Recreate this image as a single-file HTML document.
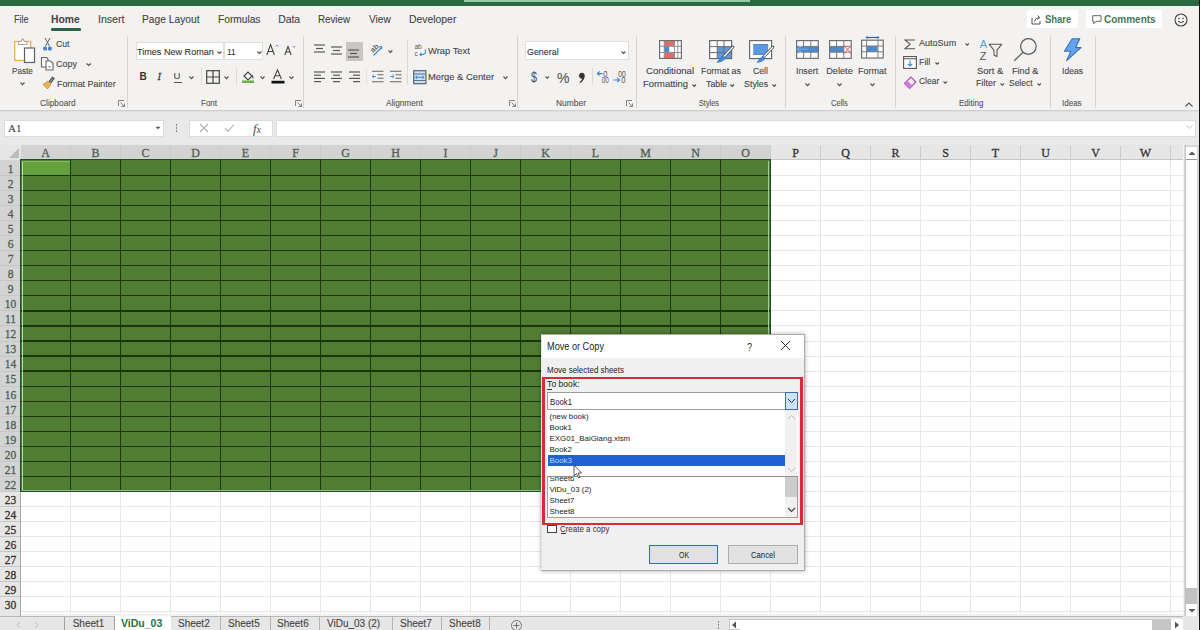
<!DOCTYPE html>
<html><head><meta charset="utf-8"><style>
html,body{margin:0;padding:0;}
body{width:1200px;height:630px;overflow:hidden;position:relative;background:#f3f2f1;font-family:"Liberation Sans", sans-serif;}
div{position:absolute;}
.t{position:absolute;white-space:nowrap;-webkit-text-stroke:0.1px currentColor;}
svg{overflow:visible}
</style></head><body>
<div style="left:0px;top:0px;width:1200px;height:6px;background:#2a6a3e"></div>
<div style="left:464px;top:0px;width:286px;height:2px;background:#9cc9aa"></div>
<div style="left:0px;top:6px;width:1200px;height:1px;background:#e6f2ea"></div>
<div style="left:0px;top:6px;width:1200px;height:104px;background:#f3f2f1"></div>
<span class="t" style="left:13.5px;top:14.70px;font-size:10.4px;line-height:10.4px;color:#444;font-weight:400;font-family:'Liberation Sans', sans-serif;transform:scaleX(0.866);transform-origin:0.00px 0;">File</span>
<span class="t" style="left:51.25px;top:14.87px;font-size:10.2px;line-height:10.2px;color:#444;font-weight:700;font-family:'Liberation Sans', sans-serif;-webkit-text-stroke:0;transform:scaleX(1.014);transform-origin:0.00px 0;">Home</span>
<div style="left:51.2px;top:28px;width:29.5px;height:2.6px;background:#2a6446;border-radius:1.3px"></div>
<span class="t" style="left:97.5px;top:14.70px;font-size:10.4px;line-height:10.4px;color:#444;font-weight:400;font-family:'Liberation Sans', sans-serif;transform:scaleX(1.019);transform-origin:0.00px 0;">Insert</span>
<span class="t" style="left:141.9px;top:14.70px;font-size:10.4px;line-height:10.4px;color:#444;font-weight:400;font-family:'Liberation Sans', sans-serif;transform:scaleX(0.985);transform-origin:0.00px 0;">Page Layout</span>
<span class="t" style="left:217.8px;top:14.70px;font-size:10.4px;line-height:10.4px;color:#444;font-weight:400;font-family:'Liberation Sans', sans-serif;transform:scaleX(0.980);transform-origin:0.00px 0;">Formulas</span>
<span class="t" style="left:278.2px;top:14.70px;font-size:10.4px;line-height:10.4px;color:#444;font-weight:400;font-family:'Liberation Sans', sans-serif;">Data</span>
<span class="t" style="left:318.4px;top:14.70px;font-size:10.4px;line-height:10.4px;color:#444;font-weight:400;font-family:'Liberation Sans', sans-serif;transform:scaleX(0.938);transform-origin:0.00px 0;">Review</span>
<span class="t" style="left:368.8px;top:14.70px;font-size:10.4px;line-height:10.4px;color:#444;font-weight:400;font-family:'Liberation Sans', sans-serif;transform:scaleX(0.975);transform-origin:0.00px 0;">View</span>
<span class="t" style="left:409.0px;top:14.70px;font-size:10.4px;line-height:10.4px;color:#444;font-weight:400;font-family:'Liberation Sans', sans-serif;">Developer</span>
<div style="left:1027px;top:10px;width:51px;height:18px;background:#fff;border-radius:2px"></div>
<div style="left:1086px;top:10px;width:76px;height:18px;background:#fff;border-radius:2px"></div>
<span class="t" style="left:1044.7px;top:14.84px;font-size:10px;line-height:10px;color:#437a5c;font-weight:700;font-family:'Liberation Sans', sans-serif;-webkit-text-stroke:0;transform:scaleX(0.946);transform-origin:0.00px 0;">Share</span>
<span class="t" style="left:1104.0px;top:14.84px;font-size:10px;line-height:10px;color:#437a5c;font-weight:700;font-family:'Liberation Sans', sans-serif;-webkit-text-stroke:0;">Comments</span>
<div style="left:127px;top:36px;width:1px;height:72px;background:#d6d4d2"></div>
<div style="left:303px;top:36px;width:1px;height:72px;background:#d6d4d2"></div>
<div style="left:517px;top:36px;width:1px;height:72px;background:#d6d4d2"></div>
<div style="left:636px;top:36px;width:1px;height:72px;background:#d6d4d2"></div>
<div style="left:784.5px;top:36px;width:1px;height:72px;background:#d6d4d2"></div>
<div style="left:894.5px;top:36px;width:1px;height:72px;background:#d6d4d2"></div>
<div style="left:1050px;top:36px;width:1px;height:72px;background:#d6d4d2"></div>
<div style="left:1095px;top:36px;width:1px;height:72px;background:#d6d4d2"></div>
<span class="t" style="left:39.5px;top:99.05px;font-size:8.8px;line-height:8.8px;color:#555;font-weight:400;font-family:'Liberation Sans', sans-serif;transform:scaleX(0.948);transform-origin:0.00px 0;">Clipboard</span>
<span class="t" style="left:201.3px;top:99.05px;font-size:8.8px;line-height:8.8px;color:#555;font-weight:400;font-family:'Liberation Sans', sans-serif;transform:scaleX(0.909);transform-origin:0.00px 0;">Font</span>
<span class="t" style="left:386.0px;top:99.05px;font-size:8.8px;line-height:8.8px;color:#555;font-weight:400;font-family:'Liberation Sans', sans-serif;transform:scaleX(0.938);transform-origin:0.00px 0;">Alignment</span>
<span class="t" style="left:555.7px;top:99.05px;font-size:8.8px;line-height:8.8px;color:#555;font-weight:400;font-family:'Liberation Sans', sans-serif;transform:scaleX(0.959);transform-origin:0.00px 0;">Number</span>
<span class="t" style="left:699.3px;top:99.05px;font-size:8.8px;line-height:8.8px;color:#555;font-weight:400;font-family:'Liberation Sans', sans-serif;transform:scaleX(0.830);transform-origin:0.00px 0;">Styles</span>
<span class="t" style="left:830.5px;top:99.05px;font-size:8.8px;line-height:8.8px;color:#555;font-weight:400;font-family:'Liberation Sans', sans-serif;transform:scaleX(0.858);transform-origin:0.00px 0;">Cells</span>
<span class="t" style="left:959.3px;top:99.05px;font-size:8.8px;line-height:8.8px;color:#555;font-weight:400;font-family:'Liberation Sans', sans-serif;transform:scaleX(0.910);transform-origin:0.00px 0;">Editing</span>
<span class="t" style="left:1062.2px;top:99.05px;font-size:8.8px;line-height:8.8px;color:#555;font-weight:400;font-family:'Liberation Sans', sans-serif;transform:scaleX(0.911);transform-origin:0.00px 0;">Ideas</span>
<div style="left:0px;top:110px;width:1200px;height:1px;background:#d0d0d0"></div>
<div style="left:0px;top:111px;width:1200px;height:34px;background:#e9e9e9"></div>
<div style="left:0px;top:111px;width:1200px;height:2px;background:linear-gradient(#dcdcdc,#e9e9e9)"></div>
<div style="left:4px;top:119.5px;width:160px;height:17.5px;background:#fff;border:1px solid #dcdcdc;box-sizing:border-box"></div>
<span class="t" style="left:8px;top:123.29px;font-size:11px;line-height:11px;color:#444;font-weight:400;font-family:'Liberation Serif', serif;">A1</span>
<svg style="position:absolute;left:155px;top:126px;" width="6" height="4" viewBox="0 0 6 4"><path d="M0.5 0.8 L5.5 0.8 L3 3.3 Z" fill="#555"/></svg>
<div style="left:176px;top:124px;width:1px;height:1.5px;background:#888"></div>
<div style="left:176px;top:127px;width:1px;height:1.5px;background:#888"></div>
<div style="left:176px;top:130px;width:1px;height:1.5px;background:#888"></div>
<div style="left:188.5px;top:119.5px;width:84.5px;height:17.5px;background:#fff;border:1px solid #dcdcdc;box-sizing:border-box"></div>
<svg style="position:absolute;left:199px;top:123px;" width="10" height="10" viewBox="0 0 10 10"><path d="M1 1 L9 9 M9 1 L1 9" stroke="#b0b0b0" stroke-width="1.1"/></svg>
<svg style="position:absolute;left:224px;top:123px;" width="11" height="10" viewBox="0 0 11 10"><path d="M1 5.5 L4 8.5 L10 1.5" stroke="#b0b0b0" fill="none" stroke-width="1.1"/></svg>
<span class="t" style="left:253px;top:122.11px;font-size:13px;line-height:13px;color:#555;font-weight:400;font-family:'Liberation Serif', serif;"><i>f</i><span style="font-size:9.5px"><i>x</i></span></span>
<div style="left:276px;top:119.5px;width:919.5px;height:17.5px;background:#fff;border:1px solid #dcdcdc;box-sizing:border-box"></div>
<svg style="position:absolute;left:1186px;top:125px;" width="7" height="5" viewBox="0 0 7 5"><path d="M0.5 0.5 L3.5 3.5 L6.5 0.5" stroke="#bbb" fill="none" stroke-width="0.9"/></svg>
<div style="left:0px;top:144.5px;width:1183px;height:15.900000000000006px;background:#e6e6e6"></div>
<div style="left:21px;top:144.5px;width:750px;height:15.900000000000006px;background:#d3d3d3"></div>
<div style="left:0px;top:160.4px;width:20px;height:331.1px;background:#d3d3d3"></div>
<div style="left:0px;top:491.5px;width:20px;height:124.4px;background:#e6e6e6"></div>
<div style="left:771px;top:158.9px;width:412px;height:1px;background:#c6c6c6"></div>
<div style="left:0px;top:160.4px;width:20.5px;height:455.5px;border-right:1.2px solid #a8a8a8;box-sizing:border-box"></div>
<svg style="position:absolute;left:9px;top:148px;" width="10" height="10" viewBox="0 0 10 10"><path d="M10 0 L10 10 L0 10 Z" fill="#bdbdbd"/></svg>
<span class="t" style="left:-54.5px;width:200px;text-align:center;top:146.95px;font-size:12px;line-height:12px;color:#4d5f55;font-weight:400;font-family:'Liberation Serif', serif;-webkit-text-stroke:0.3px #4d5f55">A</span>
<span class="t" style="left:-4.5px;width:200px;text-align:center;top:146.95px;font-size:12px;line-height:12px;color:#4d5f55;font-weight:400;font-family:'Liberation Serif', serif;-webkit-text-stroke:0.3px #4d5f55">B</span>
<div style="left:70.0px;top:145.5px;width:1px;height:14.400000000000006px;background:#cbcbcb"></div>
<span class="t" style="left:45.5px;width:200px;text-align:center;top:146.95px;font-size:12px;line-height:12px;color:#4d5f55;font-weight:400;font-family:'Liberation Serif', serif;-webkit-text-stroke:0.3px #4d5f55">C</span>
<div style="left:120.0px;top:145.5px;width:1px;height:14.400000000000006px;background:#cbcbcb"></div>
<span class="t" style="left:95.5px;width:200px;text-align:center;top:146.95px;font-size:12px;line-height:12px;color:#4d5f55;font-weight:400;font-family:'Liberation Serif', serif;-webkit-text-stroke:0.3px #4d5f55">D</span>
<div style="left:170.0px;top:145.5px;width:1px;height:14.400000000000006px;background:#cbcbcb"></div>
<span class="t" style="left:145.5px;width:200px;text-align:center;top:146.95px;font-size:12px;line-height:12px;color:#4d5f55;font-weight:400;font-family:'Liberation Serif', serif;-webkit-text-stroke:0.3px #4d5f55">E</span>
<div style="left:220.0px;top:145.5px;width:1px;height:14.400000000000006px;background:#cbcbcb"></div>
<span class="t" style="left:195.5px;width:200px;text-align:center;top:146.95px;font-size:12px;line-height:12px;color:#4d5f55;font-weight:400;font-family:'Liberation Serif', serif;-webkit-text-stroke:0.3px #4d5f55">F</span>
<div style="left:270.0px;top:145.5px;width:1px;height:14.400000000000006px;background:#cbcbcb"></div>
<span class="t" style="left:245.5px;width:200px;text-align:center;top:146.95px;font-size:12px;line-height:12px;color:#4d5f55;font-weight:400;font-family:'Liberation Serif', serif;-webkit-text-stroke:0.3px #4d5f55">G</span>
<div style="left:320.0px;top:145.5px;width:1px;height:14.400000000000006px;background:#cbcbcb"></div>
<span class="t" style="left:295.5px;width:200px;text-align:center;top:146.95px;font-size:12px;line-height:12px;color:#4d5f55;font-weight:400;font-family:'Liberation Serif', serif;-webkit-text-stroke:0.3px #4d5f55">H</span>
<div style="left:370.0px;top:145.5px;width:1px;height:14.400000000000006px;background:#cbcbcb"></div>
<span class="t" style="left:345.5px;width:200px;text-align:center;top:146.95px;font-size:12px;line-height:12px;color:#4d5f55;font-weight:400;font-family:'Liberation Serif', serif;-webkit-text-stroke:0.3px #4d5f55">I</span>
<div style="left:420.0px;top:145.5px;width:1px;height:14.400000000000006px;background:#cbcbcb"></div>
<span class="t" style="left:395.5px;width:200px;text-align:center;top:146.95px;font-size:12px;line-height:12px;color:#4d5f55;font-weight:400;font-family:'Liberation Serif', serif;-webkit-text-stroke:0.3px #4d5f55">J</span>
<div style="left:470.0px;top:145.5px;width:1px;height:14.400000000000006px;background:#cbcbcb"></div>
<span class="t" style="left:445.5px;width:200px;text-align:center;top:146.95px;font-size:12px;line-height:12px;color:#4d5f55;font-weight:400;font-family:'Liberation Serif', serif;-webkit-text-stroke:0.3px #4d5f55">K</span>
<div style="left:520.0px;top:145.5px;width:1px;height:14.400000000000006px;background:#cbcbcb"></div>
<span class="t" style="left:495.5px;width:200px;text-align:center;top:146.95px;font-size:12px;line-height:12px;color:#4d5f55;font-weight:400;font-family:'Liberation Serif', serif;-webkit-text-stroke:0.3px #4d5f55">L</span>
<div style="left:570.0px;top:145.5px;width:1px;height:14.400000000000006px;background:#cbcbcb"></div>
<span class="t" style="left:545.5px;width:200px;text-align:center;top:146.95px;font-size:12px;line-height:12px;color:#4d5f55;font-weight:400;font-family:'Liberation Serif', serif;-webkit-text-stroke:0.3px #4d5f55">M</span>
<div style="left:620.0px;top:145.5px;width:1px;height:14.400000000000006px;background:#cbcbcb"></div>
<span class="t" style="left:595.5px;width:200px;text-align:center;top:146.95px;font-size:12px;line-height:12px;color:#4d5f55;font-weight:400;font-family:'Liberation Serif', serif;-webkit-text-stroke:0.3px #4d5f55">N</span>
<div style="left:670.0px;top:145.5px;width:1px;height:14.400000000000006px;background:#cbcbcb"></div>
<span class="t" style="left:645.5px;width:200px;text-align:center;top:146.95px;font-size:12px;line-height:12px;color:#4d5f55;font-weight:400;font-family:'Liberation Serif', serif;-webkit-text-stroke:0.3px #4d5f55">O</span>
<div style="left:720.0px;top:145.5px;width:1px;height:14.400000000000006px;background:#cbcbcb"></div>
<span class="t" style="left:695.5px;width:200px;text-align:center;top:146.95px;font-size:12px;line-height:12px;color:#333;font-weight:400;font-family:'Liberation Serif', serif;-webkit-text-stroke:0.3px #333">P</span>
<div style="left:770.0px;top:145.5px;width:1px;height:14.400000000000006px;background:#cbcbcb"></div>
<span class="t" style="left:745.5px;width:200px;text-align:center;top:146.95px;font-size:12px;line-height:12px;color:#333;font-weight:400;font-family:'Liberation Serif', serif;-webkit-text-stroke:0.3px #333">Q</span>
<div style="left:820.0px;top:145.5px;width:1px;height:14.400000000000006px;background:#cbcbcb"></div>
<span class="t" style="left:795.5px;width:200px;text-align:center;top:146.95px;font-size:12px;line-height:12px;color:#333;font-weight:400;font-family:'Liberation Serif', serif;-webkit-text-stroke:0.3px #333">R</span>
<div style="left:870.0px;top:145.5px;width:1px;height:14.400000000000006px;background:#cbcbcb"></div>
<span class="t" style="left:845.5px;width:200px;text-align:center;top:146.95px;font-size:12px;line-height:12px;color:#333;font-weight:400;font-family:'Liberation Serif', serif;-webkit-text-stroke:0.3px #333">S</span>
<div style="left:920.0px;top:145.5px;width:1px;height:14.400000000000006px;background:#cbcbcb"></div>
<span class="t" style="left:895.5px;width:200px;text-align:center;top:146.95px;font-size:12px;line-height:12px;color:#333;font-weight:400;font-family:'Liberation Serif', serif;-webkit-text-stroke:0.3px #333">T</span>
<div style="left:970.0px;top:145.5px;width:1px;height:14.400000000000006px;background:#cbcbcb"></div>
<span class="t" style="left:945.5px;width:200px;text-align:center;top:146.95px;font-size:12px;line-height:12px;color:#333;font-weight:400;font-family:'Liberation Serif', serif;-webkit-text-stroke:0.3px #333">U</span>
<div style="left:1020.0px;top:145.5px;width:1px;height:14.400000000000006px;background:#cbcbcb"></div>
<span class="t" style="left:995.5px;width:200px;text-align:center;top:146.95px;font-size:12px;line-height:12px;color:#333;font-weight:400;font-family:'Liberation Serif', serif;-webkit-text-stroke:0.3px #333">V</span>
<div style="left:1070.0px;top:145.5px;width:1px;height:14.400000000000006px;background:#cbcbcb"></div>
<span class="t" style="left:1045.5px;width:200px;text-align:center;top:146.95px;font-size:12px;line-height:12px;color:#333;font-weight:400;font-family:'Liberation Serif', serif;-webkit-text-stroke:0.3px #333">W</span>
<div style="left:1120.0px;top:145.5px;width:1px;height:14.400000000000006px;background:#cbcbcb"></div>
<div style="left:1170px;top:145.5px;width:1px;height:14.400000000000006px;background:#cbcbcb"></div>
<div style="left:21px;top:160.4px;width:1162px;height:453.5px;background:#fff"></div>
<div style="left:21px;top:174.95000000000002px;width:1162px;height:1px;background:#e8e8e8"></div>
<div style="left:21px;top:190.0px;width:1162px;height:1px;background:#e8e8e8"></div>
<div style="left:21px;top:205.05px;width:1162px;height:1px;background:#e8e8e8"></div>
<div style="left:21px;top:220.10000000000002px;width:1162px;height:1px;background:#e8e8e8"></div>
<div style="left:21px;top:235.15px;width:1162px;height:1px;background:#e8e8e8"></div>
<div style="left:21px;top:250.20000000000002px;width:1162px;height:1px;background:#e8e8e8"></div>
<div style="left:21px;top:265.25px;width:1162px;height:1px;background:#e8e8e8"></div>
<div style="left:21px;top:280.3px;width:1162px;height:1px;background:#e8e8e8"></div>
<div style="left:21px;top:295.35px;width:1162px;height:1px;background:#e8e8e8"></div>
<div style="left:21px;top:310.4px;width:1162px;height:1px;background:#e8e8e8"></div>
<div style="left:21px;top:325.45000000000005px;width:1162px;height:1px;background:#e8e8e8"></div>
<div style="left:21px;top:340.5px;width:1162px;height:1px;background:#e8e8e8"></div>
<div style="left:21px;top:355.55px;width:1162px;height:1px;background:#e8e8e8"></div>
<div style="left:21px;top:370.6px;width:1162px;height:1px;background:#e8e8e8"></div>
<div style="left:21px;top:385.65px;width:1162px;height:1px;background:#e8e8e8"></div>
<div style="left:21px;top:400.70000000000005px;width:1162px;height:1px;background:#e8e8e8"></div>
<div style="left:21px;top:415.75px;width:1162px;height:1px;background:#e8e8e8"></div>
<div style="left:21px;top:430.80000000000007px;width:1162px;height:1px;background:#e8e8e8"></div>
<div style="left:21px;top:445.85px;width:1162px;height:1px;background:#e8e8e8"></div>
<div style="left:21px;top:460.9px;width:1162px;height:1px;background:#e8e8e8"></div>
<div style="left:21px;top:475.95000000000005px;width:1162px;height:1px;background:#e8e8e8"></div>
<div style="left:21px;top:491.0px;width:1162px;height:1px;background:#e8e8e8"></div>
<div style="left:21px;top:506.05000000000007px;width:1162px;height:1px;background:#e8e8e8"></div>
<div style="left:21px;top:521.1px;width:1162px;height:1px;background:#e8e8e8"></div>
<div style="left:21px;top:536.15px;width:1162px;height:1px;background:#e8e8e8"></div>
<div style="left:21px;top:551.2px;width:1162px;height:1px;background:#e8e8e8"></div>
<div style="left:21px;top:566.25px;width:1162px;height:1px;background:#e8e8e8"></div>
<div style="left:21px;top:581.3000000000001px;width:1162px;height:1px;background:#e8e8e8"></div>
<div style="left:21px;top:596.35px;width:1162px;height:1px;background:#e8e8e8"></div>
<div style="left:21px;top:611.4px;width:1162px;height:1px;background:#e8e8e8"></div>
<div style="left:70.0px;top:160.4px;width:1px;height:453.5px;background:#e8e8e8"></div>
<div style="left:120.0px;top:160.4px;width:1px;height:453.5px;background:#e8e8e8"></div>
<div style="left:170.0px;top:160.4px;width:1px;height:453.5px;background:#e8e8e8"></div>
<div style="left:220.0px;top:160.4px;width:1px;height:453.5px;background:#e8e8e8"></div>
<div style="left:270.0px;top:160.4px;width:1px;height:453.5px;background:#e8e8e8"></div>
<div style="left:320.0px;top:160.4px;width:1px;height:453.5px;background:#e8e8e8"></div>
<div style="left:370.0px;top:160.4px;width:1px;height:453.5px;background:#e8e8e8"></div>
<div style="left:420.0px;top:160.4px;width:1px;height:453.5px;background:#e8e8e8"></div>
<div style="left:470.0px;top:160.4px;width:1px;height:453.5px;background:#e8e8e8"></div>
<div style="left:520.0px;top:160.4px;width:1px;height:453.5px;background:#e8e8e8"></div>
<div style="left:570.0px;top:160.4px;width:1px;height:453.5px;background:#e8e8e8"></div>
<div style="left:620.0px;top:160.4px;width:1px;height:453.5px;background:#e8e8e8"></div>
<div style="left:670.0px;top:160.4px;width:1px;height:453.5px;background:#e8e8e8"></div>
<div style="left:720.0px;top:160.4px;width:1px;height:453.5px;background:#e8e8e8"></div>
<div style="left:770.0px;top:160.4px;width:1px;height:453.5px;background:#e8e8e8"></div>
<div style="left:820.0px;top:160.4px;width:1px;height:453.5px;background:#e8e8e8"></div>
<div style="left:870.0px;top:160.4px;width:1px;height:453.5px;background:#e8e8e8"></div>
<div style="left:920.0px;top:160.4px;width:1px;height:453.5px;background:#e8e8e8"></div>
<div style="left:970.0px;top:160.4px;width:1px;height:453.5px;background:#e8e8e8"></div>
<div style="left:1020.0px;top:160.4px;width:1px;height:453.5px;background:#e8e8e8"></div>
<div style="left:1070.0px;top:160.4px;width:1px;height:453.5px;background:#e8e8e8"></div>
<div style="left:1120.0px;top:160.4px;width:1px;height:453.5px;background:#e8e8e8"></div>
<div style="left:1170.0px;top:160.4px;width:1px;height:453.5px;background:#e8e8e8"></div>
<span class="t" style="left:-89.5px;width:200px;text-align:center;top:163.77px;font-size:11.5px;line-height:11.5px;color:#4d5f55;font-weight:400;font-family:'Liberation Serif', serif;-webkit-text-stroke:0.3px #4d5f55">1</span>
<span class="t" style="left:-89.5px;width:200px;text-align:center;top:178.82px;font-size:11.5px;line-height:11.5px;color:#4d5f55;font-weight:400;font-family:'Liberation Serif', serif;-webkit-text-stroke:0.3px #4d5f55">2</span>
<div style="left:0px;top:174.95000000000002px;width:20px;height:1px;background:#c6c6c6"></div>
<span class="t" style="left:-89.5px;width:200px;text-align:center;top:193.87px;font-size:11.5px;line-height:11.5px;color:#4d5f55;font-weight:400;font-family:'Liberation Serif', serif;-webkit-text-stroke:0.3px #4d5f55">3</span>
<div style="left:0px;top:190.0px;width:20px;height:1px;background:#c6c6c6"></div>
<span class="t" style="left:-89.5px;width:200px;text-align:center;top:208.92px;font-size:11.5px;line-height:11.5px;color:#4d5f55;font-weight:400;font-family:'Liberation Serif', serif;-webkit-text-stroke:0.3px #4d5f55">4</span>
<div style="left:0px;top:205.05px;width:20px;height:1px;background:#c6c6c6"></div>
<span class="t" style="left:-89.5px;width:200px;text-align:center;top:223.97px;font-size:11.5px;line-height:11.5px;color:#4d5f55;font-weight:400;font-family:'Liberation Serif', serif;-webkit-text-stroke:0.3px #4d5f55">5</span>
<div style="left:0px;top:220.10000000000002px;width:20px;height:1px;background:#c6c6c6"></div>
<span class="t" style="left:-89.5px;width:200px;text-align:center;top:239.02px;font-size:11.5px;line-height:11.5px;color:#4d5f55;font-weight:400;font-family:'Liberation Serif', serif;-webkit-text-stroke:0.3px #4d5f55">6</span>
<div style="left:0px;top:235.15px;width:20px;height:1px;background:#c6c6c6"></div>
<span class="t" style="left:-89.5px;width:200px;text-align:center;top:254.07px;font-size:11.5px;line-height:11.5px;color:#4d5f55;font-weight:400;font-family:'Liberation Serif', serif;-webkit-text-stroke:0.3px #4d5f55">7</span>
<div style="left:0px;top:250.20000000000002px;width:20px;height:1px;background:#c6c6c6"></div>
<span class="t" style="left:-89.5px;width:200px;text-align:center;top:269.12px;font-size:11.5px;line-height:11.5px;color:#4d5f55;font-weight:400;font-family:'Liberation Serif', serif;-webkit-text-stroke:0.3px #4d5f55">8</span>
<div style="left:0px;top:265.25px;width:20px;height:1px;background:#c6c6c6"></div>
<span class="t" style="left:-89.5px;width:200px;text-align:center;top:284.17px;font-size:11.5px;line-height:11.5px;color:#4d5f55;font-weight:400;font-family:'Liberation Serif', serif;-webkit-text-stroke:0.3px #4d5f55">9</span>
<div style="left:0px;top:280.3px;width:20px;height:1px;background:#c6c6c6"></div>
<span class="t" style="left:-89.5px;width:200px;text-align:center;top:299.22px;font-size:11.5px;line-height:11.5px;color:#4d5f55;font-weight:400;font-family:'Liberation Serif', serif;-webkit-text-stroke:0.3px #4d5f55">10</span>
<div style="left:0px;top:295.35px;width:20px;height:1px;background:#c6c6c6"></div>
<span class="t" style="left:-89.5px;width:200px;text-align:center;top:314.27px;font-size:11.5px;line-height:11.5px;color:#4d5f55;font-weight:400;font-family:'Liberation Serif', serif;-webkit-text-stroke:0.3px #4d5f55">11</span>
<div style="left:0px;top:310.4px;width:20px;height:1px;background:#c6c6c6"></div>
<span class="t" style="left:-89.5px;width:200px;text-align:center;top:329.32px;font-size:11.5px;line-height:11.5px;color:#4d5f55;font-weight:400;font-family:'Liberation Serif', serif;-webkit-text-stroke:0.3px #4d5f55">12</span>
<div style="left:0px;top:325.45000000000005px;width:20px;height:1px;background:#c6c6c6"></div>
<span class="t" style="left:-89.5px;width:200px;text-align:center;top:344.37px;font-size:11.5px;line-height:11.5px;color:#4d5f55;font-weight:400;font-family:'Liberation Serif', serif;-webkit-text-stroke:0.3px #4d5f55">13</span>
<div style="left:0px;top:340.5px;width:20px;height:1px;background:#c6c6c6"></div>
<span class="t" style="left:-89.5px;width:200px;text-align:center;top:359.42px;font-size:11.5px;line-height:11.5px;color:#4d5f55;font-weight:400;font-family:'Liberation Serif', serif;-webkit-text-stroke:0.3px #4d5f55">14</span>
<div style="left:0px;top:355.55px;width:20px;height:1px;background:#c6c6c6"></div>
<span class="t" style="left:-89.5px;width:200px;text-align:center;top:374.47px;font-size:11.5px;line-height:11.5px;color:#4d5f55;font-weight:400;font-family:'Liberation Serif', serif;-webkit-text-stroke:0.3px #4d5f55">15</span>
<div style="left:0px;top:370.6px;width:20px;height:1px;background:#c6c6c6"></div>
<span class="t" style="left:-89.5px;width:200px;text-align:center;top:389.52px;font-size:11.5px;line-height:11.5px;color:#4d5f55;font-weight:400;font-family:'Liberation Serif', serif;-webkit-text-stroke:0.3px #4d5f55">16</span>
<div style="left:0px;top:385.65px;width:20px;height:1px;background:#c6c6c6"></div>
<span class="t" style="left:-89.5px;width:200px;text-align:center;top:404.57px;font-size:11.5px;line-height:11.5px;color:#4d5f55;font-weight:400;font-family:'Liberation Serif', serif;-webkit-text-stroke:0.3px #4d5f55">17</span>
<div style="left:0px;top:400.70000000000005px;width:20px;height:1px;background:#c6c6c6"></div>
<span class="t" style="left:-89.5px;width:200px;text-align:center;top:419.62px;font-size:11.5px;line-height:11.5px;color:#4d5f55;font-weight:400;font-family:'Liberation Serif', serif;-webkit-text-stroke:0.3px #4d5f55">18</span>
<div style="left:0px;top:415.75px;width:20px;height:1px;background:#c6c6c6"></div>
<span class="t" style="left:-89.5px;width:200px;text-align:center;top:434.67px;font-size:11.5px;line-height:11.5px;color:#4d5f55;font-weight:400;font-family:'Liberation Serif', serif;-webkit-text-stroke:0.3px #4d5f55">19</span>
<div style="left:0px;top:430.80000000000007px;width:20px;height:1px;background:#c6c6c6"></div>
<span class="t" style="left:-89.5px;width:200px;text-align:center;top:449.72px;font-size:11.5px;line-height:11.5px;color:#4d5f55;font-weight:400;font-family:'Liberation Serif', serif;-webkit-text-stroke:0.3px #4d5f55">20</span>
<div style="left:0px;top:445.85px;width:20px;height:1px;background:#c6c6c6"></div>
<span class="t" style="left:-89.5px;width:200px;text-align:center;top:464.77px;font-size:11.5px;line-height:11.5px;color:#4d5f55;font-weight:400;font-family:'Liberation Serif', serif;-webkit-text-stroke:0.3px #4d5f55">21</span>
<div style="left:0px;top:460.9px;width:20px;height:1px;background:#c6c6c6"></div>
<span class="t" style="left:-89.5px;width:200px;text-align:center;top:479.82px;font-size:11.5px;line-height:11.5px;color:#4d5f55;font-weight:400;font-family:'Liberation Serif', serif;-webkit-text-stroke:0.3px #4d5f55">22</span>
<div style="left:0px;top:475.95000000000005px;width:20px;height:1px;background:#c6c6c6"></div>
<span class="t" style="left:-89.5px;width:200px;text-align:center;top:494.87px;font-size:11.5px;line-height:11.5px;color:#333;font-weight:400;font-family:'Liberation Serif', serif;-webkit-text-stroke:0.3px #333">23</span>
<div style="left:0px;top:491.0px;width:20px;height:1px;background:#c6c6c6"></div>
<span class="t" style="left:-89.5px;width:200px;text-align:center;top:509.92px;font-size:11.5px;line-height:11.5px;color:#333;font-weight:400;font-family:'Liberation Serif', serif;-webkit-text-stroke:0.3px #333">24</span>
<div style="left:0px;top:506.05000000000007px;width:20px;height:1px;background:#c6c6c6"></div>
<span class="t" style="left:-89.5px;width:200px;text-align:center;top:524.97px;font-size:11.5px;line-height:11.5px;color:#333;font-weight:400;font-family:'Liberation Serif', serif;-webkit-text-stroke:0.3px #333">25</span>
<div style="left:0px;top:521.1px;width:20px;height:1px;background:#c6c6c6"></div>
<span class="t" style="left:-89.5px;width:200px;text-align:center;top:540.02px;font-size:11.5px;line-height:11.5px;color:#333;font-weight:400;font-family:'Liberation Serif', serif;-webkit-text-stroke:0.3px #333">26</span>
<div style="left:0px;top:536.15px;width:20px;height:1px;background:#c6c6c6"></div>
<span class="t" style="left:-89.5px;width:200px;text-align:center;top:555.07px;font-size:11.5px;line-height:11.5px;color:#333;font-weight:400;font-family:'Liberation Serif', serif;-webkit-text-stroke:0.3px #333">27</span>
<div style="left:0px;top:551.2px;width:20px;height:1px;background:#c6c6c6"></div>
<span class="t" style="left:-89.5px;width:200px;text-align:center;top:570.12px;font-size:11.5px;line-height:11.5px;color:#333;font-weight:400;font-family:'Liberation Serif', serif;-webkit-text-stroke:0.3px #333">28</span>
<div style="left:0px;top:566.25px;width:20px;height:1px;background:#c6c6c6"></div>
<span class="t" style="left:-89.5px;width:200px;text-align:center;top:585.17px;font-size:11.5px;line-height:11.5px;color:#333;font-weight:400;font-family:'Liberation Serif', serif;-webkit-text-stroke:0.3px #333">29</span>
<div style="left:0px;top:581.3000000000001px;width:20px;height:1px;background:#c6c6c6"></div>
<span class="t" style="left:-89.5px;width:200px;text-align:center;top:600.22px;font-size:11.5px;line-height:11.5px;color:#333;font-weight:400;font-family:'Liberation Serif', serif;-webkit-text-stroke:0.3px #333">30</span>
<div style="left:0px;top:596.35px;width:20px;height:1px;background:#c6c6c6"></div>
<div style="left:20.2px;top:159.4px;width:750px;height:332.1px;background:#507d32"></div>
<div style="left:22px;top:160.9px;width:48.3px;height:13.850000000000001px;background:#64a03c"></div>
<div style="left:20.2px;top:174.8px;width:750px;height:1.3px;background:#1c350a"></div>
<div style="left:20.2px;top:189.85px;width:750px;height:1.3px;background:#1c350a"></div>
<div style="left:20.2px;top:204.9px;width:750px;height:1.3px;background:#1c350a"></div>
<div style="left:20.2px;top:219.95000000000002px;width:750px;height:1.3px;background:#1c350a"></div>
<div style="left:20.2px;top:235.0px;width:750px;height:1.3px;background:#1c350a"></div>
<div style="left:20.2px;top:250.05px;width:750px;height:1.3px;background:#1c350a"></div>
<div style="left:20.2px;top:265.1px;width:750px;height:1.3px;background:#1c350a"></div>
<div style="left:20.2px;top:280.15000000000003px;width:750px;height:1.3px;background:#1c350a"></div>
<div style="left:20.2px;top:295.20000000000005px;width:750px;height:1.3px;background:#1c350a"></div>
<div style="left:20.2px;top:310.25px;width:750px;height:1.3px;background:#1c350a"></div>
<div style="left:20.2px;top:325.30000000000007px;width:750px;height:1.3px;background:#1c350a"></div>
<div style="left:20.2px;top:340.35px;width:750px;height:1.3px;background:#1c350a"></div>
<div style="left:20.2px;top:355.40000000000003px;width:750px;height:1.3px;background:#1c350a"></div>
<div style="left:20.2px;top:370.45000000000005px;width:750px;height:1.3px;background:#1c350a"></div>
<div style="left:20.2px;top:385.5px;width:750px;height:1.3px;background:#1c350a"></div>
<div style="left:20.2px;top:400.55000000000007px;width:750px;height:1.3px;background:#1c350a"></div>
<div style="left:20.2px;top:415.6px;width:750px;height:1.3px;background:#1c350a"></div>
<div style="left:20.2px;top:430.6500000000001px;width:750px;height:1.3px;background:#1c350a"></div>
<div style="left:20.2px;top:445.70000000000005px;width:750px;height:1.3px;background:#1c350a"></div>
<div style="left:20.2px;top:460.75px;width:750px;height:1.3px;background:#1c350a"></div>
<div style="left:20.2px;top:475.80000000000007px;width:750px;height:1.3px;background:#1c350a"></div>
<div style="left:70.15px;top:159.4px;width:1.3px;height:332.1px;background:#1c350a"></div>
<div style="left:120.15px;top:159.4px;width:1.3px;height:332.1px;background:#1c350a"></div>
<div style="left:170.15px;top:159.4px;width:1.3px;height:332.1px;background:#1c350a"></div>
<div style="left:220.15px;top:159.4px;width:1.3px;height:332.1px;background:#1c350a"></div>
<div style="left:270.15px;top:159.4px;width:1.3px;height:332.1px;background:#1c350a"></div>
<div style="left:320.15px;top:159.4px;width:1.3px;height:332.1px;background:#1c350a"></div>
<div style="left:370.15px;top:159.4px;width:1.3px;height:332.1px;background:#1c350a"></div>
<div style="left:420.15px;top:159.4px;width:1.3px;height:332.1px;background:#1c350a"></div>
<div style="left:470.15px;top:159.4px;width:1.3px;height:332.1px;background:#1c350a"></div>
<div style="left:520.15px;top:159.4px;width:1.3px;height:332.1px;background:#1c350a"></div>
<div style="left:570.15px;top:159.4px;width:1.3px;height:332.1px;background:#1c350a"></div>
<div style="left:620.15px;top:159.4px;width:1.3px;height:332.1px;background:#1c350a"></div>
<div style="left:670.15px;top:159.4px;width:1.3px;height:332.1px;background:#1c350a"></div>
<div style="left:720.15px;top:159.4px;width:1.3px;height:332.1px;background:#1c350a"></div>
<div style="left:20.0px;top:159.4px;width:750.8px;height:332.6px;border:1.5px solid #1f4f2a;box-sizing:border-box"></div>
<div style="left:21.5px;top:160.9px;width:1px;height:329.6px;background:#b0e0a8"></div>
<div style="left:768.0px;top:160.9px;width:1px;height:329.6px;background:#a0d098"></div>
<div style="left:21.5px;top:489.5px;width:747.5px;height:1px;background:#90c088"></div>
<div style="left:22px;top:160.9px;width:48px;height:1px;background:#84bc60"></div>
<div style="left:1183.5px;top:144.5px;width:15.5px;height:472px;background:#d6d6d6"></div>
<div style="left:1184.5px;top:144.5px;width:1.5px;height:472px;background:#c4c4c4"></div>
<div style="left:1186px;top:147.2px;width:10.7px;height:12px;background:#fff"></div>
<svg style="position:absolute;left:1187.5px;top:150px;" width="8" height="6" viewBox="0 0 8 6"><path d="M0.5 5 L4 1.5 L7.5 5 Z" fill="#555"/></svg>
<div style="left:1186px;top:159.2px;width:10.7px;height:1px;background:#999"></div>
<div style="left:1186px;top:160.2px;width:10.7px;height:428px;background:#fff"></div>
<div style="left:1186px;top:588px;width:10.7px;height:16px;background:#c2c2c2"></div>
<div style="left:1186px;top:604px;width:10.7px;height:12px;background:#fff"></div>
<svg style="position:absolute;left:1187.5px;top:608px;" width="8" height="6" viewBox="0 0 8 6"><path d="M0.5 1 L4 4.5 L7.5 1 Z" fill="#555"/></svg>
<div style="left:1198.8px;top:0px;width:1.2px;height:630px;background:#111"></div>
<div style="left:0px;top:616px;width:1198px;height:14px;background:#e6e6e6"></div>
<div style="left:0px;top:616px;width:1183px;height:1px;background:#b8b8b8"></div>
<svg style="position:absolute;left:16px;top:621px;" width="6" height="8" viewBox="0 0 6 8"><path d="M4 1 L1 4 L4 7" stroke="#c0c0c0" fill="none" stroke-width="1"/></svg>
<svg style="position:absolute;left:33px;top:621px;" width="6" height="8" viewBox="0 0 6 8"><path d="M2 1 L5 4 L2 7" stroke="#c0c0c0" fill="none" stroke-width="1"/></svg>
<div style="left:64px;top:617px;width:1px;height:13px;background:#a0a0a0"></div>
<div style="left:114.5px;top:616px;width:56px;height:14px;background:#fff"></div>
<div style="left:114px;top:617px;width:1px;height:13px;background:#a0a0a0"></div>
<div style="left:220px;top:617px;width:1px;height:13px;background:#b4b4b4"></div>
<div style="left:269.5px;top:617px;width:1px;height:13px;background:#b4b4b4"></div>
<div style="left:318.75px;top:617px;width:1px;height:13px;background:#b4b4b4"></div>
<div style="left:391.75px;top:617px;width:1px;height:13px;background:#b4b4b4"></div>
<div style="left:440.75px;top:617px;width:1px;height:13px;background:#b4b4b4"></div>
<div style="left:488.75px;top:617px;width:1px;height:13px;background:#b4b4b4"></div>
<span class="t" style="left:72.7px;top:618.53px;font-size:10px;line-height:10px;color:#444;font-weight:400;font-family:'Liberation Sans', sans-serif;">Sheet1</span>
<span class="t" style="left:178px;top:618.53px;font-size:10px;line-height:10px;color:#444;font-weight:400;font-family:'Liberation Sans', sans-serif;">Sheet2</span>
<span class="t" style="left:228px;top:618.53px;font-size:10px;line-height:10px;color:#444;font-weight:400;font-family:'Liberation Sans', sans-serif;">Sheet5</span>
<span class="t" style="left:277px;top:618.53px;font-size:10px;line-height:10px;color:#444;font-weight:400;font-family:'Liberation Sans', sans-serif;">Sheet6</span>
<span class="t" style="left:327px;top:618.53px;font-size:10px;line-height:10px;color:#444;font-weight:400;font-family:'Liberation Sans', sans-serif;">ViDu_03 (2)</span>
<span class="t" style="left:400px;top:618.53px;font-size:10px;line-height:10px;color:#444;font-weight:400;font-family:'Liberation Sans', sans-serif;">Sheet7</span>
<span class="t" style="left:449px;top:618.53px;font-size:10px;line-height:10px;color:#444;font-weight:400;font-family:'Liberation Sans', sans-serif;">Sheet8</span>
<span class="t" style="left:121px;top:618.11px;font-size:10.5px;line-height:10.5px;color:#217346;font-weight:700;font-family:'Liberation Sans', sans-serif;-webkit-text-stroke:0;">ViDu_03</span>
<svg style="position:absolute;left:510px;top:619px;" width="13" height="11" viewBox="0 0 13 11"><circle cx="6.5" cy="6.5" r="5" stroke="#666" fill="none" stroke-width="0.9"/><path d="M6.5 3.5 V9.5 M3.5 6.5 H9.5" stroke="#666" stroke-width="0.9"/></svg>
<div style="left:718px;top:621px;width:1px;height:1.5px;background:#888"></div>
<div style="left:718px;top:624px;width:1px;height:1.5px;background:#888"></div>
<div style="left:718px;top:627px;width:1px;height:1.5px;background:#888"></div>
<div style="left:728.5px;top:619px;width:12px;height:11px;background:#fff;border:1px solid #c6c6c6;box-sizing:border-box"></div>
<svg style="position:absolute;left:731px;top:621px;" width="6" height="8" viewBox="0 0 6 8"><path d="M5 0.5 L1 4 L5 7.5 Z" fill="#555"/></svg>
<div style="left:740px;top:619px;width:412px;height:11px;background:#fff;border-top:1px solid #c6c6c6;box-sizing:border-box"></div>
<div style="left:1152px;top:619px;width:19px;height:11px;background:#c6c6c6"></div>
<div style="left:1171px;top:619px;width:12px;height:11px;background:#fff"></div>
<svg style="position:absolute;left:1174px;top:621px;" width="6" height="8" viewBox="0 0 6 8"><path d="M1 0.5 L5 4 L1 7.5 Z" fill="#555"/></svg>
<div style="left:541px;top:333.5px;width:263.5px;height:237.0px;background:#f0f0f0;box-shadow:0 0 4px rgba(0,0,0,0.35);border:1px solid rgba(0,0,0,0.28);border-left-color:rgba(0,0,0,0.05);box-sizing:border-box"></div>
<div style="left:541.5px;top:334.5px;width:262.0px;height:23.5px;background:#fff"></div>
<span class="t" style="left:547.0px;top:341.46px;font-size:10.8px;line-height:10.8px;color:#222;font-weight:400;font-family:'Liberation Sans', sans-serif;-webkit-text-stroke:0;transform:scaleX(0.848);transform-origin:0.00px 0;">Move or Copy</span>
<span class="t" style="left:747.4px;top:342.11px;font-size:10.5px;line-height:10.5px;color:#333;font-weight:400;font-family:'Liberation Sans', sans-serif;-webkit-text-stroke:0;transform:scaleX(0.875);transform-origin:0.00px 0;">?</span>
<svg style="position:absolute;left:780px;top:340px;" width="11" height="11" viewBox="0 0 11 11"><path d="M1 1 L10 10 M10 1 L1 10" stroke="#333" stroke-width="1"/></svg>
<span class="t" style="left:547.0px;top:366.22px;font-size:8.6px;line-height:8.6px;color:#222;font-weight:400;font-family:'Liberation Sans', sans-serif;-webkit-text-stroke:0;transform:scaleX(0.926);transform-origin:0.00px 0;">Move selected sheets</span>
<span class="t" style="left:547.1px;top:380.22px;font-size:8.6px;line-height:8.6px;color:#222;font-weight:400;font-family:'Liberation Sans', sans-serif;-webkit-text-stroke:0;">To book:</span>
<div style="left:547.3px;top:388.5px;width:4.3px;height:0.8px;background:#333"></div>
<div style="left:547px;top:392px;width:251px;height:18px;background:#fff;border:1px solid #9c9c9c;box-sizing:border-box"></div>
<span class="t" style="left:550.0px;top:397.57px;font-size:8.3px;line-height:8.3px;color:#222;font-weight:400;font-family:'Liberation Sans', sans-serif;-webkit-text-stroke:0;transform:scaleX(0.935);transform-origin:0.00px 0;">Book1</span>
<div style="left:784.5px;top:392px;width:13.5px;height:18px;background:#cce4f7;border:1px solid #3b6cab;box-sizing:border-box"></div>
<svg style="position:absolute;left:787px;top:398px;" width="9" height="6" viewBox="0 0 9 6"><path d="M1 1 L4.5 4.5 L8 1" stroke="#333" fill="none" stroke-width="1"/></svg>
<div style="left:547px;top:410px;width:251px;height:108px;background:#fff;border:1px solid #a0a0a0;box-sizing:border-box"></div>
<span class="t" style="left:549.5px;top:475.01px;font-size:7.9px;line-height:7.9px;color:#222;font-weight:400;font-family:'Liberation Sans', sans-serif;-webkit-text-stroke:0;">Sheet6</span>
<span class="t" style="left:549.5px;top:486.11px;font-size:7.9px;line-height:7.9px;color:#222;font-weight:400;font-family:'Liberation Sans', sans-serif;-webkit-text-stroke:0;">ViDu_03 (2)</span>
<span class="t" style="left:549.5px;top:497.21px;font-size:7.9px;line-height:7.9px;color:#222;font-weight:400;font-family:'Liberation Sans', sans-serif;-webkit-text-stroke:0;">Sheet7</span>
<span class="t" style="left:549.5px;top:508.31px;font-size:7.9px;line-height:7.9px;color:#222;font-weight:400;font-family:'Liberation Sans', sans-serif;-webkit-text-stroke:0;">Sheet8</span>
<div style="left:785px;top:477px;width:12px;height:40px;background:#f0f0f0"></div>
<div style="left:785px;top:477px;width:12px;height:20px;background:#cdcdcd"></div>
<svg style="position:absolute;left:787px;top:507px;" width="9" height="6" viewBox="0 0 9 6"><path d="M1 1 L4.5 4.5 L8 1" stroke="#444" fill="none" stroke-width="1.2"/></svg>
<div style="left:547px;top:410px;width:251px;height:67px;background:#fff;border-bottom:1px solid #9a8a9a;box-sizing:border-box"></div>
<div style="left:785px;top:410px;width:12px;height:66px;background:#f0f0f0"></div>
<svg style="position:absolute;left:787px;top:414px;" width="9" height="6" viewBox="0 0 9 6"><path d="M1 5 L4.5 1.5 L8 5" stroke="#bbb" fill="none" stroke-width="1"/></svg>
<svg style="position:absolute;left:787px;top:467px;" width="9" height="6" viewBox="0 0 9 6"><path d="M1 1 L4.5 4.5 L8 1" stroke="#bbb" fill="none" stroke-width="1"/></svg>
<div style="left:547.5px;top:455.3px;width:237px;height:10.4px;background:#1f62d0"></div>
<span class="t" style="left:549.5px;top:412.61px;font-size:7.9px;line-height:7.9px;color:#222;font-weight:400;font-family:'Liberation Sans', sans-serif;-webkit-text-stroke:0;">(new book)</span>
<span class="t" style="left:549.5px;top:423.81px;font-size:7.9px;line-height:7.9px;color:#222;font-weight:400;font-family:'Liberation Sans', sans-serif;-webkit-text-stroke:0;">Book1</span>
<span class="t" style="left:549.5px;top:434.71px;font-size:7.9px;line-height:7.9px;color:#222;font-weight:400;font-family:'Liberation Sans', sans-serif;-webkit-text-stroke:0;">EXG01_BaiGiang.xlsm</span>
<span class="t" style="left:549.5px;top:446.01px;font-size:7.9px;line-height:7.9px;color:#222;font-weight:400;font-family:'Liberation Sans', sans-serif;-webkit-text-stroke:0;">Book2</span>
<span class="t" style="left:549.5px;top:457.11px;font-size:7.9px;line-height:7.9px;color:#bcd4ff;font-weight:400;font-family:'Liberation Sans', sans-serif;-webkit-text-stroke:0;">Book3</span>
<svg style="position:absolute;left:573px;top:464px;" width="10" height="16" viewBox="0 0 10 16"><path d="M1 1 L1 12 L3.5 9.5 L5.5 14 L7 13.3 L5 9 L8.5 9 Z" fill="#fff" stroke="#333" stroke-width="0.8"/></svg>
<div style="left:547px;top:525px;width:10.3px;height:8.3px;background:#fff;border:1px solid #444;box-sizing:border-box"></div>
<span class="t" style="left:560.3px;top:524.72px;font-size:8.6px;line-height:8.6px;color:#333;font-weight:400;font-family:'Liberation Sans', sans-serif;-webkit-text-stroke:0;transform:scaleX(0.923);transform-origin:0.00px 0;">Create a copy</span>
<div style="left:560.5px;top:533.2px;width:5px;height:0.8px;background:#333"></div>
<div style="left:542.2px;top:377.1px;width:260.6px;height:148.1px;border-style:solid;border-color:#d62c38;border-width:2.5px 3.5px 2.8px 3.8px;box-sizing:border-box"></div>
<div style="left:648.8px;top:545px;width:69px;height:18.7px;background:#e1e1e1;border:1.6px solid #3b6cab;box-shadow:inset 0 0 0 1px #cfe2f7;box-sizing:border-box"></div>
<span class="t" style="left:679.0px;top:551.02px;font-size:8.6px;line-height:8.6px;color:#222;font-weight:400;font-family:'Liberation Sans', sans-serif;-webkit-text-stroke:0;transform:scaleX(0.805);transform-origin:0.00px 0;">OK</span>
<div style="left:728px;top:545px;width:70px;height:18.7px;background:#e1e1e1;border:1px solid #adadad;box-sizing:border-box"></div>
<span class="t" style="left:751.0px;top:551.02px;font-size:8.6px;line-height:8.6px;color:#222;font-weight:400;font-family:'Liberation Sans', sans-serif;-webkit-text-stroke:0;transform:scaleX(0.896);transform-origin:0.00px 0;">Cancel</span>
<svg style="position:absolute;left:13px;top:37px;" width="23" height="27" viewBox="0 0 23 27">
<rect x="1.7" y="4.5" width="16" height="19" fill="#fff" stroke="#eab05a" stroke-width="1.3"/>
<path d="M5.5 7.5 L5.5 4.5 L8 4.5 L9.7 1.5 L11.4 4.5 L14 4.5 L14 7.5 Z" fill="#fff" stroke="#b8a898" stroke-width="1.1"/>
<rect x="11.5" y="11" width="10" height="14.5" fill="#fff" stroke="#606060" stroke-width="1.2"/>
</svg>
<span class="t" style="left:12.3px;top:67.01px;font-size:9.2px;line-height:9.2px;color:#444;font-weight:400;font-family:'Liberation Sans', sans-serif;transform:scaleX(0.881);transform-origin:0.00px 0;">Paste</span>
<svg style="position:absolute;left:20px;top:82px;" width="5" height="3" viewBox="0 0 5 3"><path d="M0.5 0.5 L2.5 2.7 L4.5 0.5" stroke="#555" fill="none" stroke-width="1.15"/></svg>
<svg style="position:absolute;left:42px;top:37px;" width="11" height="15" viewBox="0 0 11 15">
<path d="M3 1 L7.6 9.5 M8 1 L3.4 9.5" stroke="#606060" stroke-width="1"/>
<rect x="1.2" y="9.8" width="3.8" height="3.6" rx="1.2" fill="#4a86c8"/><rect x="6" y="9.8" width="3.8" height="3.6" rx="1.2" fill="#4a86c8"/>
</svg>
<span class="t" style="left:56.2px;top:39.81px;font-size:9.2px;line-height:9.2px;color:#444;font-weight:400;font-family:'Liberation Sans', sans-serif;transform:scaleX(0.937);transform-origin:0.00px 0;">Cut</span>
<svg style="position:absolute;left:40px;top:56px;" width="15" height="15" viewBox="0 0 15 15">
<path d="M1.5 1.5 L6.5 1.5 L8 3 L8 11 L1.5 11 Z" fill="#fff" stroke="#666" stroke-width="1.1"/>
<path d="M6 5 L10.5 5 L13 7.5 L13 14 L6 14 Z" fill="#fff" stroke="#666" stroke-width="1.1"/>
<rect x="8.5" y="10" width="2" height="1.5" fill="#888"/>
</svg>
<span class="t" style="left:56.2px;top:59.81px;font-size:9.2px;line-height:9.2px;color:#444;font-weight:400;font-family:'Liberation Sans', sans-serif;transform:scaleX(0.973);transform-origin:0.00px 0;">Copy</span>
<svg style="position:absolute;left:86px;top:62.7px;" width="5.4" height="2.7" viewBox="0 0 5.4 2.7"><path d="M0.5 0.5 L2.7 2.4000000000000004 L4.9 0.5" stroke="#555" fill="none" stroke-width="1.15"/></svg>
<svg style="position:absolute;left:41px;top:76px;" width="14" height="14" viewBox="0 0 14 14">
<path d="M8 6 L11.5 1.5 L13 2.5 L9.5 7" stroke="#555" stroke-width="1.3" fill="none"/>
<path d="M2 8.5 L7 5 L10 8 L6.5 13 Z" fill="#eab05a" stroke="#c58a30" stroke-width="0.8"/>
</svg>
<span class="t" style="left:56.7px;top:79.61px;font-size:9.2px;line-height:9.2px;color:#444;font-weight:400;font-family:'Liberation Sans', sans-serif;transform:scaleX(0.965);transform-origin:0.00px 0;">Format Painter</span>
<svg style="position:absolute;left:118px;top:100px;" width="7" height="7" viewBox="0 0 7 7"><path d="M0.5 0.5 H6 M0.5 0.5 V6 M2.5 2.5 L6.5 6.5 M6.5 3.5 V6.5 H3.5" stroke="#777" fill="none" stroke-width="0.9"/></svg>
<div style="left:135.5px;top:41.6px;width:88.5px;height:18.5px;background:#fff;border:1px solid #e1dfdd;box-sizing:border-box"></div>
<div style="left:223.5px;top:41.6px;width:39px;height:18.5px;background:#fff;border:1px solid #e1dfdd;box-sizing:border-box"></div>
<span class="t" style="left:137.0px;top:47.61px;font-size:9.2px;line-height:9.2px;color:#333;font-weight:400;font-family:'Liberation Sans', sans-serif;transform:scaleX(0.989);transform-origin:0.00px 0;">Times New Roman</span>
<svg style="position:absolute;left:216.5px;top:50.6px;" width="5" height="2.8" viewBox="0 0 5 2.8"><path d="M0.5 0.5 L2.5 2.5 L4.5 0.5" stroke="#555" fill="none" stroke-width="1.15"/></svg>
<span class="t" style="left:227.0px;top:47.61px;font-size:9.2px;line-height:9.2px;color:#333;font-weight:400;font-family:'Liberation Sans', sans-serif;transform:scaleX(0.909);transform-origin:0.00px 0;">11</span>
<svg style="position:absolute;left:256.5px;top:50.6px;" width="5" height="2.8" viewBox="0 0 5 2.8"><path d="M0.5 0.5 L2.5 2.5 L4.5 0.5" stroke="#555" fill="none" stroke-width="1.15"/></svg>
<svg style="position:absolute;left:266px;top:43px;" width="14" height="13" viewBox="0 0 14 13"><path d="M0.8 12 L4.6 1.5 L8.4 12 M2.2 8.5 H7" stroke="#444" fill="none" stroke-width="1.1"/><path d="M9.5 3.5 L11 2 L12.5 3.5" stroke="#5a9ad8" fill="none" stroke-width="1"/></svg>
<svg style="position:absolute;left:284px;top:45px;" width="14" height="11" viewBox="0 0 14 11"><path d="M0.8 10 L4 1.5 L7.2 10 M2 7 H6" stroke="#444" fill="none" stroke-width="1.1"/><path d="M8.5 1 L10 2.5 L11.5 1" stroke="#5a9ad8" fill="none" stroke-width="1"/></svg>
<span class="t" style="left:139.5px;top:71.83px;font-size:10px;line-height:10px;color:#333;font-weight:700;font-family:'Liberation Sans', sans-serif;-webkit-text-stroke:0;">B</span>
<span class="t" style="left:157.5px;top:71.51px;font-size:10.5px;line-height:10.5px;color:#444;font-weight:400;font-family:'Liberation Serif', serif;font-style:italic;-webkit-text-stroke:0.3px #444">I</span>
<span class="t" style="left:173.5px;top:71.46px;font-size:9.5px;line-height:9.5px;color:#444;font-weight:400;font-family:'Liberation Sans', sans-serif;">U</span>
<div style="left:173.5px;top:81.5px;width:8px;height:1px;background:#555"></div>
<svg style="position:absolute;left:189px;top:75.5px;" width="5" height="3" viewBox="0 0 5 3"><path d="M0.5 0.5 L2.5 2.7 L4.5 0.5" stroke="#555" fill="none" stroke-width="1.15"/></svg>
<div style="left:201px;top:68px;width:1px;height:17px;background:#dcdad8"></div>
<svg style="position:absolute;left:206px;top:70px;" width="14" height="14" viewBox="0 0 14 14"><rect x="0.7" y="0.7" width="12.6" height="12.6" fill="none" stroke="#444" stroke-width="1.2"/><path d="M7 0.7 V13.3 M0.7 7 H13.3" stroke="#444" stroke-width="1.2"/></svg>
<svg style="position:absolute;left:223.5px;top:75.5px;" width="5" height="3" viewBox="0 0 5 3"><path d="M0.5 0.5 L2.5 2.7 L4.5 0.5" stroke="#555" fill="none" stroke-width="1.15"/></svg>
<div style="left:236px;top:68px;width:1px;height:17px;background:#dcdad8"></div>
<svg style="position:absolute;left:241px;top:70px;" width="14" height="14" viewBox="0 0 14 14"><path d="M3 6 L7 2 L11 6 L7 10 Z" fill="none" stroke="#444" stroke-width="1.1"/><path d="M11 5 Q12.5 7 11.8 8.5" stroke="#444" fill="none" stroke-width="1.1"/><rect x="1" y="10.5" width="12" height="2.5" fill="#6ab04c"/></svg>
<svg style="position:absolute;left:259.5px;top:75.5px;" width="5" height="3" viewBox="0 0 5 3"><path d="M0.5 0.5 L2.5 2.7 L4.5 0.5" stroke="#555" fill="none" stroke-width="1.15"/></svg>
<svg style="position:absolute;left:271px;top:69px;" width="14" height="16" viewBox="0 0 14 16"><path d="M2.6 10 L6.5 0.8 L10.4 10 M4 6.8 H9" stroke="#444" fill="none" stroke-width="1.1"/><rect x="0.5" y="11.8" width="13" height="2.7" fill="#111"/></svg>
<svg style="position:absolute;left:289px;top:75.5px;" width="5" height="3" viewBox="0 0 5 3"><path d="M0.5 0.5 L2.5 2.7 L4.5 0.5" stroke="#555" fill="none" stroke-width="1.15"/></svg>
<svg style="position:absolute;left:295px;top:100px;" width="7" height="7" viewBox="0 0 7 7"><path d="M0.5 0.5 H6 M0.5 0.5 V6 M2.5 2.5 L6.5 6.5 M6.5 3.5 V6.5 H3.5" stroke="#777" fill="none" stroke-width="0.9"/></svg>
<div style="left:345.5px;top:42px;width:17.2px;height:18.8px;background:#c8c6c4"></div>
<svg style="position:absolute;left:313.5px;top:43.5px;" width="14" height="14" viewBox="0 0 14 14"><path d="M0 1.0 H11" stroke="#585858" stroke-width="1.2"/><path d="M2 4.5 H9" stroke="#585858" stroke-width="1.2"/><path d="M0 8.0 H11" stroke="#585858" stroke-width="1.2"/></svg>
<svg style="position:absolute;left:331px;top:46px;" width="14" height="14" viewBox="0 0 14 14"><path d="M0 1.0 H11" stroke="#585858" stroke-width="1.2"/><path d="M2 4.5 H9" stroke="#585858" stroke-width="1.2"/><path d="M0 8.0 H11" stroke="#585858" stroke-width="1.2"/></svg>
<svg style="position:absolute;left:348px;top:49px;" width="14" height="14" viewBox="0 0 14 14"><path d="M0 1.0 H11" stroke="#585858" stroke-width="1.2"/><path d="M2 4.5 H9" stroke="#585858" stroke-width="1.2"/><path d="M0 8.0 H11" stroke="#585858" stroke-width="1.2"/></svg>
<svg style="position:absolute;left:313.5px;top:70.5px;" width="14" height="14" viewBox="0 0 14 14"><path d="M0 1.0 H11" stroke="#585858" stroke-width="1.2"/><path d="M0 4.2 H7" stroke="#585858" stroke-width="1.2"/><path d="M0 7.4 H11" stroke="#585858" stroke-width="1.2"/><path d="M0 10.600000000000001 H7" stroke="#585858" stroke-width="1.2"/></svg>
<svg style="position:absolute;left:331px;top:70.5px;" width="14" height="14" viewBox="0 0 14 14"><path d="M0 1.0 H11" stroke="#585858" stroke-width="1.2"/><path d="M2 4.2 H9" stroke="#585858" stroke-width="1.2"/><path d="M0 7.4 H11" stroke="#585858" stroke-width="1.2"/><path d="M2 10.600000000000001 H9" stroke="#585858" stroke-width="1.2"/></svg>
<svg style="position:absolute;left:349px;top:70.5px;" width="14" height="14" viewBox="0 0 14 14"><path d="M0 1.0 H11" stroke="#585858" stroke-width="1.2"/><path d="M4 4.2 H11" stroke="#585858" stroke-width="1.2"/><path d="M0 7.4 H11" stroke="#585858" stroke-width="1.2"/><path d="M4 10.600000000000001 H11" stroke="#585858" stroke-width="1.2"/></svg>
<div style="left:366px;top:68px;width:1px;height:17px;background:#e6e4e2"></div>
<svg style="position:absolute;left:371px;top:70px;" width="14" height="14" viewBox="0 0 14 14"><path d="M1 1.2 H12.5 M6.5 4.8 H12.5 M6.5 8.2 H12.5 M1 11.8 H12.5" stroke="#666" stroke-width="1.1"/><path d="M1.3 6.5 H5 M3 4.8 L1.2 6.5 L3 8.2" stroke="#3a86d0" fill="none" stroke-width="0.9"/></svg>
<svg style="position:absolute;left:389px;top:70px;" width="14" height="14" viewBox="0 0 14 14"><path d="M1 1.2 H12.5 M6.5 4.8 H12.5 M6.5 8.2 H12.5 M1 11.8 H12.5" stroke="#666" stroke-width="1.1"/><path d="M1.3 6.5 H5 M3.3 4.8 L5.1 6.5 L3.3 8.2" stroke="#3a86d0" fill="none" stroke-width="0.9"/></svg>
<svg style="position:absolute;left:370px;top:42px;" width="15" height="15" viewBox="0 0 15 15"><text x="0" y="8.5" font-size="7.5" font-weight="bold" font-family="Liberation Sans" fill="#666" transform="rotate(-45 4.5 6)">ab</text><path d="M3.5 13.5 L11.5 5.5" stroke="#3a86d0" stroke-width="1.1"/><path d="M9 5 L12 4.5 L11.5 7.5" stroke="#3a86d0" fill="none" stroke-width="1"/></svg>
<svg style="position:absolute;left:387.5px;top:49.5px;" width="4.8" height="2.8" viewBox="0 0 4.8 2.8"><path d="M0.5 0.5 L2.4 2.5 L4.3 0.5" stroke="#555" fill="none" stroke-width="1.15"/></svg>
<div style="left:407px;top:40px;width:1px;height:45px;background:#dcdad8"></div>
<svg style="position:absolute;left:414px;top:42px;" width="13" height="15" viewBox="0 0 13 15"><text x="0.5" y="6.5" font-size="6.5" font-family="Liberation Sans" fill="#555">ab</text><text x="0.5" y="13.5" font-size="6.5" font-family="Liberation Sans" fill="#555">c</text><path d="M11 7.5 Q13 11 9 12.5 L6 12.5" stroke="#3a86d0" fill="none" stroke-width="1.1"/><path d="M7.5 11 L6 12.5 L7.5 14" stroke="#3a86d0" fill="none" stroke-width="1.1"/></svg>
<span class="t" style="left:428.4px;top:46.91px;font-size:9.2px;line-height:9.2px;color:#444;font-weight:400;font-family:'Liberation Sans', sans-serif;transform:scaleX(1.020);transform-origin:0.00px 0;">Wrap Text</span>
<svg style="position:absolute;left:412.5px;top:69.5px;" width="14" height="15" viewBox="0 0 14 15"><rect x="0.7" y="0.7" width="12.2" height="13" fill="#c9e0f5" stroke="#5a6470" stroke-width="1.2"/><path d="M0.7 4 H12.9 M0.7 10.5 H12.9" stroke="#5a6470" stroke-width="0.9"/><path d="M2.5 7.3 H11 M4.2 5.7 L2.5 7.3 L4.2 8.9 M9.3 5.7 L11 7.3 L9.3 8.9" stroke="#3a86d0" fill="none" stroke-width="1"/></svg>
<span class="t" style="left:428.4px;top:72.71px;font-size:9.2px;line-height:9.2px;color:#444;font-weight:400;font-family:'Liberation Sans', sans-serif;transform:scaleX(1.018);transform-origin:0.00px 0;">Merge &amp; Center</span>
<svg style="position:absolute;left:502.5px;top:76px;" width="5" height="3" viewBox="0 0 5 3"><path d="M0.5 0.5 L2.5 2.7 L4.5 0.5" stroke="#555" fill="none" stroke-width="1.15"/></svg>
<svg style="position:absolute;left:509px;top:100px;" width="7" height="7" viewBox="0 0 7 7"><path d="M0.5 0.5 H6 M0.5 0.5 V6 M2.5 2.5 L6.5 6.5 M6.5 3.5 V6.5 H3.5" stroke="#777" fill="none" stroke-width="0.9"/></svg>
<div style="left:525px;top:41px;width:103.5px;height:19px;background:#fff;border:1px solid #e1dfdd;box-sizing:border-box"></div>
<span class="t" style="left:526.8px;top:47.51px;font-size:9.2px;line-height:9.2px;color:#333;font-weight:400;font-family:'Liberation Sans', sans-serif;transform:scaleX(0.968);transform-origin:0.00px 0;">General</span>
<svg style="position:absolute;left:621px;top:50.6px;" width="5" height="2.8" viewBox="0 0 5 2.8"><path d="M0.5 0.5 L2.5 2.5 L4.5 0.5" stroke="#555" fill="none" stroke-width="1.15"/></svg>
<span class="t" style="left:530.5px;top:69.95px;font-size:14px;line-height:14px;color:#555;font-weight:400;font-family:'Liberation Sans', sans-serif;transform:scaleX(0.772);transform-origin:0.00px 0;">$</span>
<svg style="position:absolute;left:544.5px;top:76px;" width="4.5" height="2.5" viewBox="0 0 4.5 2.5"><path d="M0.5 0.5 L2.25 2.2 L4.0 0.5" stroke="#555" fill="none" stroke-width="1.15"/></svg>
<span class="t" style="left:557.0px;top:69.68px;font-size:15.5px;line-height:15.5px;color:#555;font-weight:400;font-family:'Liberation Sans', sans-serif;transform:scaleX(0.906);transform-origin:0.00px 0;">%</span>
<svg style="position:absolute;left:578px;top:72px;" width="8" height="12" viewBox="0 0 8 12"><path d="M4 0.8 C6.4 0.8 7.2 3 6.6 5.2 C6 7.6 4.4 9.6 2 11 L1.4 10.1 C3 9 3.9 7.9 4.2 6.7 C2.2 6.6 1 5.4 1 3.7 C1 1.9 2.3 0.8 4 0.8 Z" fill="#333"/></svg>
<div style="left:592px;top:68px;width:1px;height:17px;background:#dcdad8"></div>
<svg style="position:absolute;left:596px;top:69px;" width="14" height="16" viewBox="0 0 14 16"><text x="7.3" y="7.7" font-size="8.2" textLength="4.2" lengthAdjust="spacingAndGlyphs" font-family="Liberation Sans" fill="#555">0</text><text x="5.8" y="14.2" font-size="8.2" textLength="7" lengthAdjust="spacingAndGlyphs" font-family="Liberation Sans" fill="#555">00</text><path d="M6.5 4.6 H1.5 M3.6 2.5 L1.3 4.6 L3.6 6.7" stroke="#3a86d0" fill="none" stroke-width="1.1"/></svg>
<svg style="position:absolute;left:612px;top:69px;" width="15" height="16" viewBox="0 0 15 16"><text x="6.3" y="7.7" font-size="8.2" textLength="7.5" lengthAdjust="spacingAndGlyphs" font-family="Liberation Sans" fill="#555">00</text><text x="9.3" y="14.2" font-size="8.2" textLength="4.3" lengthAdjust="spacingAndGlyphs" font-family="Liberation Sans" fill="#555">0</text><path d="M1.2 11 H7.5 M5.3 8.9 L7.6 11 L5.3 13.1" stroke="#3a86d0" fill="none" stroke-width="1.1"/></svg>
<svg style="position:absolute;left:626px;top:100px;" width="7" height="7" viewBox="0 0 7 7"><path d="M0.5 0.5 H6 M0.5 0.5 V6 M2.5 2.5 L6.5 6.5 M6.5 3.5 V6.5 H3.5" stroke="#777" fill="none" stroke-width="0.9"/></svg>
<svg style="position:absolute;left:659px;top:40px;" width="23" height="19" viewBox="0 0 23 19">
<rect x="0.6" y="0.6" width="21.8" height="17.8" fill="#fff"/>
<rect x="5.2" y="0.6" width="10.3" height="5.7" fill="#e46b6b"/>
<rect x="5.2" y="12.5" width="10.3" height="5.9" fill="#e46b6b"/>
<rect x="5.2" y="6.3" width="5" height="6.2" fill="#4a8ad4"/>
<path d="M5.2 0.6 V18.4 M15.5 0.6 V18.4 M18.8 0.6 V18.4 M0.6 6.3 H22.4 M0.6 12.5 H22.4" stroke="#8a8a8a" stroke-width="0.9"/>
<rect x="0.6" y="0.6" width="21.8" height="17.8" fill="none" stroke="#707070" stroke-width="1.2"/>
</svg>
<span class="t" style="left:645.6px;top:66.61px;font-size:9.2px;line-height:9.2px;color:#444;font-weight:400;font-family:'Liberation Sans', sans-serif;transform:scaleX(1.046);transform-origin:0.00px 0;">Conditional</span>
<span class="t" style="left:643.0px;top:79.71px;font-size:9.2px;line-height:9.2px;color:#444;font-weight:400;font-family:'Liberation Sans', sans-serif;transform:scaleX(1.023);transform-origin:0.00px 0;">Formatting</span>
<svg style="position:absolute;left:691.5px;top:83.5px;" width="4.5" height="2.8" viewBox="0 0 4.5 2.8"><path d="M0.5 0.5 L2.25 2.5 L4.0 0.5" stroke="#555" fill="none" stroke-width="1.15"/></svg>
<svg style="position:absolute;left:709px;top:40px;" width="25" height="23" viewBox="0 0 25 23">
<rect x="0.6" y="0.6" width="22" height="18" fill="#fff"/>
<rect x="8.2" y="6.6" width="14.4" height="12" fill="#5a9ae0"/>
<path d="M8.2 0.6 V18.6 M15 0.6 V18.6 M0.6 6.6 H22.6 M0.6 12.6 H22.6" stroke="#707070" stroke-width="1"/>
<rect x="0.6" y="0.6" width="22" height="18" fill="none" stroke="#6a6a6a" stroke-width="1.2"/>
<path d="M24 7 L14.5 17" stroke="#555" stroke-width="2.6" stroke-linecap="round"/><path d="M24 7 L14.5 17" stroke="#fff" stroke-width="1.2"/>
<path d="M14.2 16 Q11 17.5 8 22.5 Q13.5 22 16.5 18.5 Z" fill="#4a8ad4" stroke="#2a6ab4" stroke-width="0.6"/>
</svg>
<span class="t" style="left:700.6px;top:66.61px;font-size:9.2px;line-height:9.2px;color:#444;font-weight:400;font-family:'Liberation Sans', sans-serif;transform:scaleX(0.966);transform-origin:0.00px 0;">Format as</span>
<span class="t" style="left:706.0px;top:79.71px;font-size:9.2px;line-height:9.2px;color:#444;font-weight:400;font-family:'Liberation Sans', sans-serif;transform:scaleX(0.955);transform-origin:0.00px 0;">Table</span>
<svg style="position:absolute;left:730px;top:83.5px;" width="4.5" height="2.8" viewBox="0 0 4.5 2.8"><path d="M0.5 0.5 L2.25 2.5 L4.0 0.5" stroke="#555" fill="none" stroke-width="1.15"/></svg>
<svg style="position:absolute;left:748.5px;top:40px;" width="25" height="23" viewBox="0 0 25 23">
<rect x="0.6" y="0.6" width="22" height="18" fill="#fff"/>
<rect x="4.2" y="4.6" width="15" height="9.8" fill="#5a9ae0"/>
<path d="M4.2 4.6 H19.2 M4.2 14.4 H19.2" stroke="#3a78c0" stroke-width="0.9"/>
<rect x="0.6" y="0.6" width="22" height="18" fill="none" stroke="#6a6a6a" stroke-width="1.2"/>
<path d="M24 7 L14.5 17" stroke="#555" stroke-width="2.6" stroke-linecap="round"/><path d="M24 7 L14.5 17" stroke="#fff" stroke-width="1.2"/>
<path d="M14.2 16 Q11 17.5 8 22.5 Q13.5 22 16.5 18.5 Z" fill="#4a8ad4" stroke="#2a6ab4" stroke-width="0.6"/>
</svg>
<span class="t" style="left:753.0px;top:66.61px;font-size:9.2px;line-height:9.2px;color:#444;font-weight:400;font-family:'Liberation Sans', sans-serif;transform:scaleX(0.945);transform-origin:0.00px 0;">Cell</span>
<span class="t" style="left:743.75px;top:79.71px;font-size:9.2px;line-height:9.2px;color:#444;font-weight:400;font-family:'Liberation Sans', sans-serif;transform:scaleX(0.967);transform-origin:0.00px 0;">Styles</span>
<svg style="position:absolute;left:771.5px;top:83.5px;" width="4.5" height="2.8" viewBox="0 0 4.5 2.8"><path d="M0.5 0.5 L2.25 2.5 L4.0 0.5" stroke="#555" fill="none" stroke-width="1.15"/></svg>
<svg style="position:absolute;left:796px;top:40px;" width="24" height="20" viewBox="0 0 24 20"><rect x="0.6" y="0.6" width="21.6" height="17.8" fill="#fff"/><rect x="0" y="6.4" width="23" height="5.8" fill="#4a8ad4"/><rect x="0.6" y="0.6" width="21.6" height="17.8" fill="none" stroke="#6e6e6e" stroke-width="1.2"/><path d="M7.6 0.6 V18.4 M14.8 0.6 V18.4 M0.6 6.4 H22.2 M0.6 12.2 H22.2" stroke="#7a7a7a" stroke-width="1"/><path d="M12 9.3 H2 M5.5 5.5 L1.2 9.3 L5.5 13" stroke="#bcd8f4" fill="none" stroke-width="1.1"/><rect x="1" y="7" width="21" height="4.6" fill="#4a8ad4" opacity="0.6"/></svg>
<span class="t" style="left:796.1px;top:66.81px;font-size:9.2px;line-height:9.2px;color:#444;font-weight:400;font-family:'Liberation Sans', sans-serif;transform:scaleX(0.961);transform-origin:0.00px 0;">Insert</span>
<svg style="position:absolute;left:804.5px;top:82.5px;" width="5" height="3" viewBox="0 0 5 3"><path d="M0.5 0.5 L2.5 2.7 L4.5 0.5" stroke="#555" fill="none" stroke-width="1.15"/></svg>
<svg style="position:absolute;left:829px;top:40px;" width="24" height="20" viewBox="0 0 24 20"><rect x="0.6" y="0.6" width="21.6" height="17.8" fill="#fff"/><rect x="0.6" y="6.4" width="14.2" height="5.8" fill="#4a8ad4"/><rect x="0.6" y="0.6" width="21.6" height="17.8" fill="none" stroke="#6e6e6e" stroke-width="1.2"/><path d="M7.6 0.6 V18.4 M14.8 0.6 V18.4 M0.6 6.4 H22.2 M0.6 12.2 H22.2" stroke="#7a7a7a" stroke-width="1"/><path d="M14.5 5 L22.5 14 M22.5 5 L14.5 14" stroke="#e86a6a" stroke-width="1.1"/></svg>
<span class="t" style="left:826.2px;top:66.81px;font-size:9.2px;line-height:9.2px;color:#444;font-weight:400;font-family:'Liberation Sans', sans-serif;">Delete</span>
<svg style="position:absolute;left:836.5px;top:82.5px;" width="5" height="3" viewBox="0 0 5 3"><path d="M0.5 0.5 L2.5 2.7 L4.5 0.5" stroke="#555" fill="none" stroke-width="1.15"/></svg>
<svg style="position:absolute;left:861px;top:36px;" width="24" height="23" viewBox="0 0 24 23"><path d="M5.5 1.5 H17.5" stroke="#2f5f9a" stroke-width="1.2"/><path d="M6.5 0 L5 1.5 L6.5 3 M16.5 0 L18 1.5 L16.5 3" stroke="#2f5f9a" fill="none" stroke-width="0.8"/><rect x="0.6" y="4.2" width="21.6" height="17.8" fill="#fff"/><rect x="6" y="10" width="10.5" height="5.8" fill="#4a8ad4"/><rect x="0.6" y="4.2" width="21.6" height="17.8" fill="none" stroke="#6e6e6e" stroke-width="1.2"/><path d="M5.6 4.2 V22 M17 4.2 V22 M0.6 10 H22.2 M0.6 15.8 H22.2" stroke="#7a7a7a" stroke-width="1"/></svg>
<span class="t" style="left:858.0px;top:66.81px;font-size:9.2px;line-height:9.2px;color:#444;font-weight:400;font-family:'Liberation Sans', sans-serif;transform:scaleX(0.975);transform-origin:0.00px 0;">Format</span>
<svg style="position:absolute;left:869.5px;top:82.5px;" width="5" height="3" viewBox="0 0 5 3"><path d="M0.5 0.5 L2.5 2.7 L4.5 0.5" stroke="#555" fill="none" stroke-width="1.15"/></svg>
<svg style="position:absolute;left:904px;top:38.5px;" width="12" height="11" viewBox="0 0 12 11"><path d="M11 1 H1 L6 5.2 L1 9.8 H11" stroke="#555" fill="none" stroke-width="1.1" stroke-linejoin="miter"/></svg>
<span class="t" style="left:919.0px;top:38.91px;font-size:9.2px;line-height:9.2px;color:#444;font-weight:400;font-family:'Liberation Sans', sans-serif;transform:scaleX(0.983);transform-origin:0.00px 0;">AutoSum</span>
<svg style="position:absolute;left:965px;top:43px;" width="4.5" height="2.5" viewBox="0 0 4.5 2.5"><path d="M0.5 0.5 L2.25 2.2 L4.0 0.5" stroke="#555" fill="none" stroke-width="1.15"/></svg>
<svg style="position:absolute;left:903px;top:56px;" width="14" height="13" viewBox="0 0 14 13"><rect x="0.6" y="0.6" width="12.8" height="11.8" fill="#fff" stroke="#555" stroke-width="1.1"/><path d="M0.6 2.8 H13.4" stroke="#555" stroke-width="1"/><path d="M7 4.5 V10 M4.8 7.8 L7 10 L9.2 7.8" stroke="#3a86d0" fill="none" stroke-width="1.1"/></svg>
<span class="t" style="left:918.7px;top:57.61px;font-size:9.2px;line-height:9.2px;color:#444;font-weight:400;font-family:'Liberation Sans', sans-serif;transform:scaleX(0.963);transform-origin:0.00px 0;">Fill</span>
<svg style="position:absolute;left:935px;top:61.5px;" width="4.5" height="2.5" viewBox="0 0 4.5 2.5"><path d="M0.5 0.5 L2.25 2.2 L4.0 0.5" stroke="#555" fill="none" stroke-width="1.15"/></svg>
<svg style="position:absolute;left:902.5px;top:75px;" width="15" height="14" viewBox="0 0 15 14"><path d="M1.5 8.5 L8 2 L13 7 L6.5 13.5 Z" fill="none" stroke="#b040c0" stroke-width="1.1"/><path d="M1.5 8.5 L4.5 5.5 L9.5 10.5 L6.5 13.5 Z" fill="#d080e0"/></svg>
<span class="t" style="left:919.0px;top:77.11px;font-size:9.2px;line-height:9.2px;color:#444;font-weight:400;font-family:'Liberation Sans', sans-serif;transform:scaleX(0.923);transform-origin:0.00px 0;">Clear</span>
<svg style="position:absolute;left:943px;top:80.5px;" width="4.5" height="2.5" viewBox="0 0 4.5 2.5"><path d="M0.5 0.5 L2.25 2.2 L4.0 0.5" stroke="#555" fill="none" stroke-width="1.15"/></svg>
<svg style="position:absolute;left:978px;top:38px;" width="25" height="24" viewBox="0 0 25 24"><text x="1.8" y="10.4" font-size="11" font-family="Liberation Sans" fill="#5a9ad8">A</text><text x="1.8" y="22" font-size="11" font-family="Liberation Sans" fill="#555">Z</text><path d="M11.2 6.3 H23.6 L19 12.2 V18.6 L16 17.3 V12.2 Z" fill="none" stroke="#5a5a5a" stroke-width="1.1" stroke-linejoin="round"/></svg>
<span class="t" style="left:977.3px;top:66.81px;font-size:9.2px;line-height:9.2px;color:#444;font-weight:400;font-family:'Liberation Sans', sans-serif;transform:scaleX(1.032);transform-origin:0.00px 0;">Sort &amp;</span>
<span class="t" style="left:976.2px;top:79.21px;font-size:9.2px;line-height:9.2px;color:#444;font-weight:400;font-family:'Liberation Sans', sans-serif;transform:scaleX(0.974);transform-origin:0.00px 0;">Filter</span>
<svg style="position:absolute;left:999.5px;top:83px;" width="4.5" height="2.5" viewBox="0 0 4.5 2.5"><path d="M0.5 0.5 L2.25 2.2 L4.0 0.5" stroke="#555" fill="none" stroke-width="1.15"/></svg>
<svg style="position:absolute;left:1013px;top:38px;" width="25" height="24" viewBox="0 0 25 24"><circle cx="15.4" cy="8.5" r="7.8" fill="none" stroke="#5a5a5a" stroke-width="1.2"/><path d="M10 14.2 L1.3 22.8" stroke="#5a5a5a" stroke-width="1.2"/></svg>
<span class="t" style="left:1011.9px;top:66.81px;font-size:9.2px;line-height:9.2px;color:#444;font-weight:400;font-family:'Liberation Sans', sans-serif;">Find &amp;</span>
<span class="t" style="left:1008.9px;top:79.21px;font-size:9.2px;line-height:9.2px;color:#444;font-weight:400;font-family:'Liberation Sans', sans-serif;transform:scaleX(0.923);transform-origin:0.00px 0;">Select</span>
<svg style="position:absolute;left:1036.5px;top:83px;" width="4.5" height="2.5" viewBox="0 0 4.5 2.5"><path d="M0.5 0.5 L2.25 2.2 L4.0 0.5" stroke="#555" fill="none" stroke-width="1.15"/></svg>
<svg style="position:absolute;left:1063px;top:38px;" width="19" height="24" viewBox="0 0 19 24"><path d="M9.2 0.8 L16.8 0.8 L12.6 9.6 L18 9.6 L3.6 22.6 L7.8 13.2 L1.4 13.2 Z" fill="#62a4ee" stroke="#3470b8" stroke-width="1.1" stroke-linejoin="round"/></svg>
<span class="t" style="left:1062.0px;top:66.81px;font-size:9.2px;line-height:9.2px;color:#444;font-weight:400;font-family:'Liberation Sans', sans-serif;transform:scaleX(0.934);transform-origin:0.00px 0;">Ideas</span>
<svg style="position:absolute;left:1184.5px;top:102px;" width="8" height="5" viewBox="0 0 8 5"><path d="M0.5 4.5 L4 1 L7.5 4.5" stroke="#555" fill="none" stroke-width="1.1"/></svg>
<svg style="position:absolute;left:1031px;top:14px;" width="11" height="11" viewBox="0 0 11 11"><path d="M1 4 V10 H9 V7" stroke="#555" fill="none" stroke-width="1"/><path d="M3.5 7.5 Q4 3.5 8.5 3.5 M6.5 1.5 L8.8 3.5 L6.5 5.5" stroke="#555" fill="none" stroke-width="1"/></svg>
<svg style="position:absolute;left:1092px;top:14.5px;" width="10" height="10" viewBox="0 0 10 10"><path d="M0.7 0.7 H9 V6.3 H3.8 L1.8 8.8 V6.3 H0.7 Z" stroke="#555" fill="none" stroke-width="0.9"/></svg>
<svg style="position:absolute;left:1174px;top:12.5px;" width="14" height="14" viewBox="0 0 14 14"><circle cx="7" cy="7" r="6" fill="none" stroke="#444" stroke-width="1.1"/><circle cx="5" cy="5.5" r="0.8" fill="#444"/><circle cx="9" cy="5.5" r="0.8" fill="#444"/><path d="M4 8.3 Q7 11 10 8.3" stroke="#444" fill="none" stroke-width="1"/></svg>
</body></html>
